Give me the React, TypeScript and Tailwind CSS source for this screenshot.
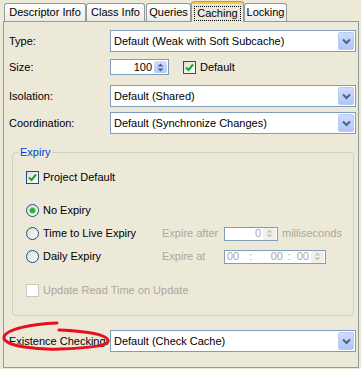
import React from "react";

/* Small pieces of a Windows XP style form */

type ComboProps = { value: string };

const Chevron = () => (
  <svg width="9" height="7" viewBox="0 0 9 7">
    <path d="M1 1.5 L4.5 5 L8 1.5" fill="none" stroke="#4D6185" strokeWidth="2" />
  </svg>
);

const Combo: React.FC<ComboProps> = ({ value }) => (
  <div className="flex h-[22px] w-[246px] items-center border border-[#7F9DB9] bg-white pl-[3px]">
    <span className="flex-1 truncate">{value}</span>
    <span className="mr-px flex h-[18px] w-[16px] items-center justify-center rounded-[2px] border border-[#B8CBF5] bg-gradient-to-b from-[#CFDCFD] to-[#B0C5F7]">
      <Chevron />
    </span>
  </div>
);

const SpinArrows = ({ disabled = false }: { disabled?: boolean }) => (
  <span
    className={`flex h-[12px] w-[13px] flex-col items-center justify-center gap-[1px] rounded-[2px] ${
      disabled ? "bg-[#F0EFE8]" : "bg-gradient-to-b from-[#D2DEFD] to-[#B5C8F8]"
    }`}
  >
    <svg width="7" height="4" viewBox="0 0 7 4">
      <path d="M0.5 3.5 L3.5 0.5 L6.5 3.5 Z" fill={disabled ? "#C9C7BA" : "#4D6185"} />
    </svg>
    <svg width="7" height="4" viewBox="0 0 7 4">
      <path d="M0.5 0.5 L3.5 3.5 L6.5 0.5 Z" fill={disabled ? "#C9C7BA" : "#4D6185"} />
    </svg>
  </span>
);

const CheckBox = ({ checked = false, disabled = false }: { checked?: boolean; disabled?: boolean }) => (
  <span
    className={`flex h-[13px] w-[13px] shrink-0 items-center justify-center border ${
      disabled ? "border-[#CAC8BB] bg-white" : "border-[#1C5180] bg-gradient-to-br from-[#DCDCD7] to-white"
    }`}
  >
    {checked && (
      <svg width="9" height="9" viewBox="0 0 9 9">
        <path d="M1 4.5 L3.5 7 L8 1.5" fill="none" stroke="#21A121" strokeWidth="2" />
      </svg>
    )}
  </span>
);

const Radio = ({ checked = false }: { checked?: boolean }) => (
  <span className="flex h-[13px] w-[13px] shrink-0 items-center justify-center rounded-full border border-[#1C5180] bg-gradient-to-br from-[#DCDCD7] to-white">
    {checked && <span className="h-[5px] w-[5px] rounded-full bg-[#2BB02B] shadow-[0_0_0_1px_#9BDB9B]" />}
  </span>
);

type TabProps = { label: string; width: string; selected?: boolean; extra?: string };

const Tab: React.FC<TabProps> = ({ label, width, selected = false, extra = "" }) =>
  selected ? (
    <div
      className={`relative z-10 -mb-px flex h-[21px] ${width} ${extra} flex-col rounded-t-[3px] border-x border-[#919B9C] bg-[#ECE9D8]`}
    >
      <span className="h-[3px] rounded-t-[3px] border-t border-[#E68B2C] bg-[#FFC73C]" />
      <span className="flex flex-1 items-center justify-center">
        <span className="border border-dotted border-black px-[2px] leading-[13px]">{label}</span>
      </span>
    </div>
  ) : (
    <div
      className={`flex h-[18px] ${width} ${extra} items-center justify-center rounded-t-[3px] border border-b-0 border-[#919B9C] bg-gradient-to-b from-white to-[#ECEBE6]`}
    >
      {label}
    </div>
  );

const App: React.FC = () => {
  return (
    <div className="relative h-[369px] w-[361px] overflow-hidden bg-[#ECE9D8] font-['Liberation_Sans',Arial,sans-serif] text-[11px] text-black">
      {/* Tabs */}
      <div className="flex h-[21px] items-end pl-[4px]">
        <Tab label="Descriptor Info" width="w-[82px]" />
        <Tab label="Class Info" width="w-[59px]" />
        <Tab label="Queries" width="w-[45px]" extra="ml-px" />
        <Tab label="Caching" width="w-[53px]" selected />
        <Tab label="Locking" width="w-[43px]" />
      </div>

      {/* Panel */}
      <div className="ml-[3px] flex h-[347px] w-[356px] flex-col border border-[#919B9C] pl-[5px] pt-[8px]">
        <div className="flex items-center">
          <span className="w-[101px] shrink-0">Type:</span>
          <Combo value="Default (Weak with Soft Subcache)" />
        </div>

        <div className="mt-[7px] flex h-[16px] items-center">
          <span className="w-[101px] shrink-0">Size:</span>
          <div className="flex h-[16px] w-[59px] items-center border border-[#7F9DB9] bg-white">
            <span className="flex-1 pr-[2px] text-right">100</span>
            <span className="mr-px">
              <SpinArrows />
            </span>
          </div>
          <span className="ml-[14px] flex items-center gap-[4px]">
            <CheckBox checked />
            Default
          </span>
        </div>

        <div className="mt-[10px] flex items-center">
          <span className="w-[101px] shrink-0">Isolation:</span>
          <Combo value="Default (Shared)" />
        </div>

        <div className="mt-[5px] flex items-center">
          <span className="w-[101px] shrink-0">Coordination:</span>
          <Combo value="Default (Synchronize Changes)" />
        </div>

        {/* Expiry group */}
        <div className="relative ml-[3px] mt-[18px] flex h-[164px] w-[342px] flex-col rounded-[4px] border border-[#D0D0BF] pl-[13px]">
          <span className="absolute -top-[7px] left-[6px] bg-[#ECE9D8] px-[1px] leading-[13px] text-[#0046D5]">
            Expiry
          </span>

          <div className="mt-[18px] flex h-[13px] items-center gap-[4px]">
            <CheckBox checked />
            Project Default
          </div>

          <div className="mt-[20px] flex h-[13px] items-center gap-[4px]">
            <Radio checked />
            No Expiry
          </div>

          <div className="mt-[10px] flex h-[13px] items-center">
            <span className="flex w-[136px] items-center gap-[4px]">
              <Radio />
              Time to Live Expiry
            </span>
            <span className="w-[62px] text-[#ACA899]">Expire after</span>
            <div className="flex h-[14px] w-[54px] items-center border border-[#7F9DB9] bg-white">
              <span className="flex-1 pr-[2px] text-right text-[#ACA899]">0</span>
              <span className="mr-px">
                <SpinArrows disabled />
              </span>
            </div>
            <span className="ml-[4px] text-[#ACA899]">milliseconds</span>
          </div>

          <div className="mt-[10px] flex h-[13px] items-center">
            <span className="flex w-[136px] items-center gap-[4px]">
              <Radio />
              Daily Expiry
            </span>
            <span className="w-[62px] text-[#ACA899]">Expire at</span>
            <div className="flex h-[14px] w-[102px] items-center border border-[#7F9DB9] bg-white pl-[2px] text-[#ACA899]">
              <span className="w-[22px]">00</span>
              <span className="w-[12px]">:</span>
              <span className="w-[22px] text-right">00</span>
              <span className="w-[12px] text-center">:</span>
              <span className="w-[14px] text-right">00</span>
              <span className="ml-auto mr-px">
                <SpinArrows disabled />
              </span>
            </div>
          </div>

          <div className="mt-[21px] flex h-[13px] items-center gap-[4px] text-[#ACA899]">
            <CheckBox disabled />
            Update Read Time on Update
          </div>
        </div>

        <div className="mt-[14px] flex items-center">
          <span className="w-[101px] shrink-0">Existence Checking:</span>
          <Combo value="Default (Check Cache)" />
        </div>
      </div>

      {/* Hand-drawn red annotation */}
      <svg className="pointer-events-none absolute left-0 top-0" width="361" height="369" viewBox="0 0 361 369">
        <path
          d="M57 323 C32 324 6 329 4 337 C2 346 38 350 60 349 C88 348 110 346 108 340 C106 334 82 331 59 330"
          fill="none"
          stroke="#E8101C"
          strokeWidth="3"
          strokeLinecap="round"
        />
      </svg>
    </div>
  );
};

export default App;
